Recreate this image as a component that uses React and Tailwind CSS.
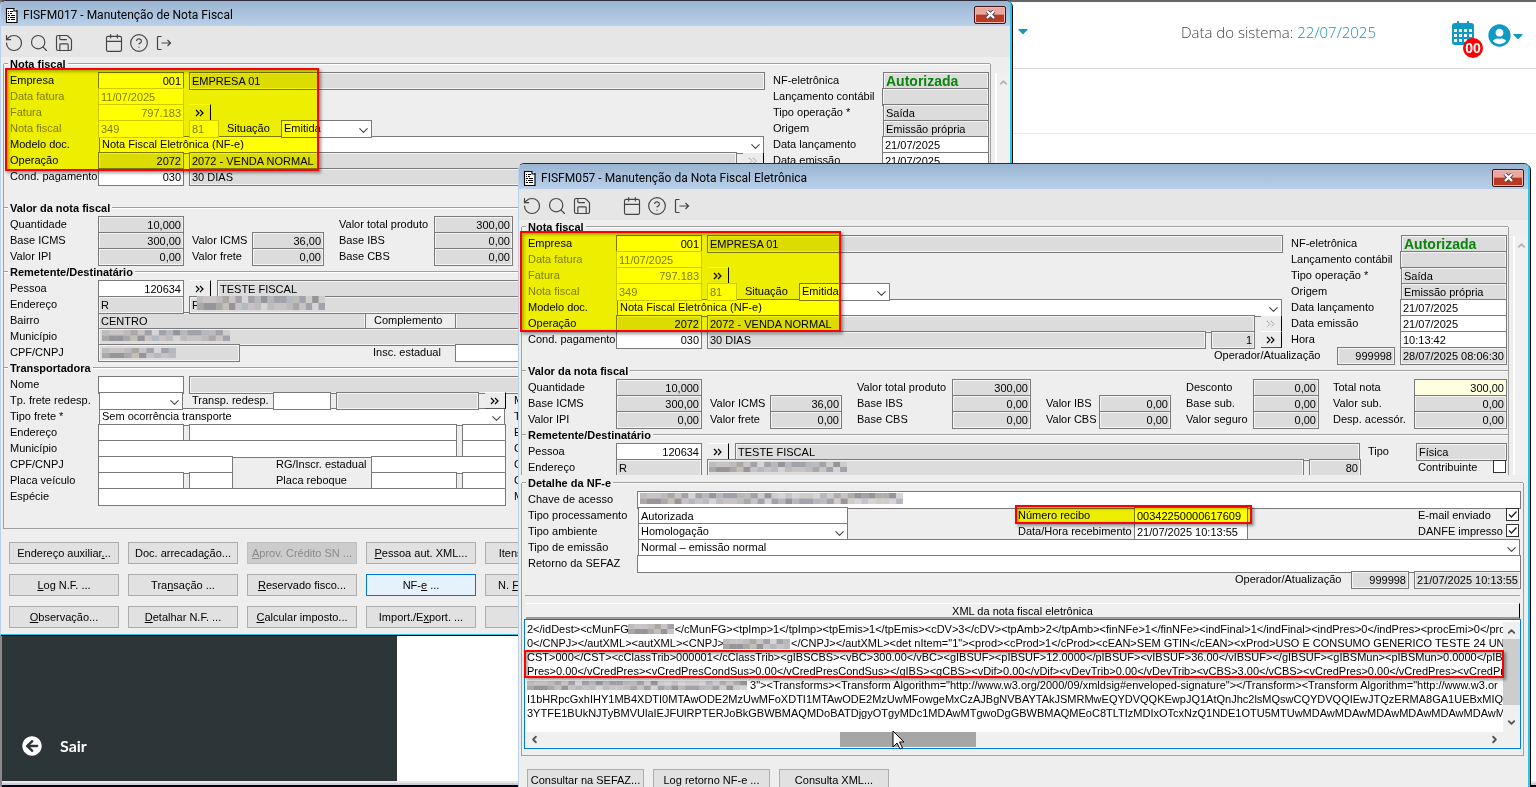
import React from 'react';
import { RotateCcw, Search, Save, Calendar, CircleHelp, ChevronUp, ChevronDown, ChevronLeft, ChevronRight } from 'lucide-react';
import { FaUserCircle, FaArrowCircleLeft, FaCaretDown } from 'react-icons/fa';

const XML_LINES = [
  '2</idDest><cMunFG               </cMunFG><tpImp>1</tpImp><tpEmis>1</tpEmis><cDV>3</cDV><tpAmb>2</tpAmb><finNFe>1</finNFe><indFinal>1</indFinal><indPres>0</indPres><procEmi>0</procEmi><v',
  '0</CNPJ></autXML><autXML><CNPJ>                      </CNPJ></autXML><det nItem="1"><prod><cProd>1</cProd><cEAN>SEM GTIN</cEAN><xProd>USO E CONSUMO GENERICO TESTE 24 UNICA</xProd>',
  'CST>000</CST><cClassTrib>000001</cClassTrib><gIBSCBS><vBC>300.00</vBC><gIBSUF><pIBSUF>12.0000</pIBSUF><vIBSUF>36.00</vIBSUF></gIBSUF><gIBSMun><pIBSMun>0.0000</pIBSMun><vIB',
  'Pres>0.00</vCredPres><vCredPresCondSus>0.00</vCredPresCondSus></gIBS><gCBS><vDif>0.00</vDif><vDevTrib>0.00</vDevTrib><vCBS>3.00</vCBS><vCredPres>0.00</vCredPres><vCredPresCond',
  '                                                                         3"><Transforms><Transform Algorithm="http://www.w3.org/2000/09/xmldsig#enveloped-signature"></Transform><Transform Algorithm="http://www.w3.or',
  'I1bHRpcGxhIHY1MB4XDTI0MTAwODE2MzUwMFoXDTI1MTAwODE2MzUwMFowgeMxCzAJBgNVBAYTAkJSMRMwEQYDVQQKEwpJQ1AtQnJhc2lsMQswCQYDVQQIEwJTQzERMA8GA1UEBxMIQmx1bW',
  '3YTFE1BUkNJTyBMVUlaIEJFUlRPTERJoBkGBWBMAQMDoBATDjgyOTgyMDc1MDAwMTgwoDgGBWBMAQMEoC8TLTIzMDIxOTcxNzQ1NDE1OTU5MTUwMDAwMDAwMDAwMDAwMDAwMDAwMDAwMDA',
];

const TONES = ['#bdbbbb', '#96959a', '#cfcdca', '#aaa8a6', '#d6d4d6', '#a1a2aa', '#c2bfb6', '#b4b8bf', '#c9c3c5', '#b0adab'];

/* ================= SMALL PIECES ================= */

// pixelated strip over private data
function Mosaic({ cols, rows = 2, className = '' }) {
  const cells = [];
  for (let y = 0; y < rows; y++) {
    for (let x = 0; x < cols; x++) {
      cells.push(<rect key={`${x}-${y}`} x={x} y={y} width="1.05" height="1.05" fill={TONES[(x * 7 + y * 3 + ((x * x) % 11)) % 10]} />);
    }
  }
  return (
    <svg aria-hidden="true" viewBox={`0 0 ${cols} ${rows}`} preserveAspectRatio="none"
         className={`absolute z-10 ${className}`}>
      {cells}
    </svg>
  );
}

// yellow marker with a red frame
function Marker({ className }) {
  return (
    <>
      <div className={`pointer-events-none absolute z-20 bg-[#ffff00] mix-blend-multiply ${className}`} />
      <div className={`pointer-events-none absolute z-20 border-2 border-[#ff0000] shadow-[2px_2px_3px_#00000066,inset_2px_2px_3px_#00000044] ${className}`} />
    </>
  );
}

function Lbl({ htmlFor, w = '', dim, children }) {
  return (
    <label htmlFor={htmlFor} className={`shrink-0 whitespace-nowrap leading-4 ${w} ${dim ? 'text-[#7d7d7d]' : 'text-black'}`}>
      {children}
    </label>
  );
}

const KINDS = {
  edit: 'bg-white border-[#7a7a7a] text-black',
  read: 'bg-[#dcdcdc] border-[#7a7a7a] text-black shadow-[inset_0_0_0_1px_#f4f4f4]',
  dim: 'bg-white border-[#cccccc] text-[#7d7d7d]',
  total: 'bg-[#ffffe1] border-[#7a7a7a] text-black',
  ok: 'bg-[#dcdcdc] border-[#7a7a7a] text-[#0a840a] font-bold text-sm shadow-[inset_0_0_0_1px_#f4f4f4]',
};

function Box({ id, name, value = '', w = '', kind = 'edit', right }) {
  return (
    <input
      id={id}
      aria-label={name}
      readOnly
      value={value}
      className={`h-[18px] min-w-0 border px-[2px] outline-none ${w} ${KINDS[kind]} ${right ? 'text-right' : ''}`}
    />
  );
}

function Pick({ id, name, value = '', w = '' }) {
  return (
    <div className={`relative h-[18px] min-w-0 ${w}`}>
      <select id={id} aria-label={name} defaultValue={value}
              className="block h-[18px] w-full appearance-none border border-[#7a7a7a] bg-white px-[2px] pb-[2px] leading-[14px] text-black outline-none">
        <option>{value}</option>
      </select>
      <ChevronDown className="pointer-events-none absolute right-px top-[3px] h-[15px] w-[15px] text-[#444]" strokeWidth={1.7} />
    </div>
  );
}

function More({ name, disabled }) {
  return (
    <button aria-label={name} disabled={disabled}
            className="flex h-[17px] w-[21px] shrink-0 items-center justify-center border-b border-r border-t border-b-[#555] border-r-black border-t-white bg-[#ececec]">
      <svg width="10" height="8" viewBox="0 0 10 8" fill="none"
           className={disabled ? 'stroke-[#a0a0a0]' : 'stroke-black'} strokeWidth="1.2">
        <path d="M1 1l3 3-3 3M5 1l3 3-3 3" strokeDasharray={disabled ? '1 1' : undefined} />
      </svg>
    </button>
  );
}

function Row({ children, className = '' }) {
  return <div className={`flex h-4 items-start ${className}`}>{children}</div>;
}

function Legend({ children, className = '' }) {
  return (
    <div className={`flex h-4 items-center ${className}`}>
      <span className="w-1 border-b border-t border-b-white border-t-[#a0a0a0]" />
      <b className="whitespace-nowrap px-[2px] leading-4">{children}</b>
      <span className="flex-1 border-b border-t border-b-white border-t-[#a0a0a0]" />
    </div>
  );
}

// letter after "&" is the shortcut key
function Act({ text = '', w = 'w-[110px]', disabled, active }) {
  const [before, rest = ''] = text.split('&');
  return (
    <button disabled={disabled}
            className={`h-[22px] shrink-0 whitespace-nowrap border ${w}
              ${disabled ? 'border-[#bfbfbf] bg-[#cccccc] text-[#8a8a8a]' : ''}
              ${active ? 'border-[#0078d7] bg-[#e5f1fb]' : ''}
              ${!disabled && !active ? 'border-[#adadad] bg-[#e1e1e1]' : ''}`}>
      {before}<span className="underline">{rest.slice(0, 1)}</span>{rest.slice(1)}
    </button>
  );
}

function ExitIcon() {
  return (
    <svg width="16" height="16" viewBox="0 0 16 16" fill="none" stroke="#444" strokeWidth="1.2">
      <path d="M5.500 1.500h-3a1 1 0 0 0-1 1v11a1 1 0 0 0 1 1h3M5.500 8h9M11.500 5l3 3-3 3" />
    </svg>
  );
}

/* ================= WINDOW ================= */

function Win({ title, className, children }) {
  const ico = 'h-5 w-5 text-[#444]';
  return (
    <section className={`absolute flex flex-col overflow-hidden rounded-t-md border-l border-r-2 border-t border-l-[#b9d1ea] border-r-[#29c4e8] border-t-[#2b2b3a] bg-[#eeeeee] shadow-[1px_1px_0_#000] ${className}`}>
      <header className="flex h-[25px] shrink-0 items-center bg-linear-to-b from-[#9ab4d1] to-[#b9d1ea] pl-1 pr-1 pt-[2px]">
        <svg width="13" height="16" viewBox="0 0 13 16" aria-hidden="true">
          <path d="M1 1h8l3 3v11H1z" fill="#fff" />
          <path d="M1.500 15V1.500H9M12 3v12.500H1M9 1v3h3" fill="none" stroke="#000" strokeWidth="1.200" />
          <path d="M3 4.500h1M5 4.500h3M3 6.500h1M5 6.500h2M3 8.500h2M6 8.500h4M3 10.500h1M5 10.500h5M3 12.500h2M6 12.500h4" stroke="#000" />
        </svg>
        <h1 className="flex-1 pl-[5px] font-['Roboto'] text-xs text-black">{title}</h1>
        <button aria-label="Fechar"
                className="flex h-[18px] w-8 items-center justify-center rounded-xs border border-[#42141c] bg-linear-to-b from-[#e9a79d] from-45% to-[#b93a22] to-50% shadow-[inset_0_0_0_1px_#f0b8ae]">
          <svg width="11" height="9" viewBox="0 0 11 9">
            <path d="M2 1l7 7M9 1L2 8" stroke="#4a4a5c" strokeWidth="4" />
            <path d="M2 1l7 7M9 1L2 8" stroke="#fff" strokeWidth="2.200" />
          </svg>
        </button>
      </header>

      <nav className="flex h-[31px] shrink-0 items-center gap-[5px] bg-[#e6e6e6] pb-px pl-[3px] pt-[3px]">
        <button aria-label="Desfazer"><RotateCcw className={ico} strokeWidth={1.4} /></button>
        <button aria-label="Pesquisar"><Search className={ico} strokeWidth={1.4} /></button>
        <button aria-label="Salvar"><Save className={ico} strokeWidth={1.4} /></button>
        <button aria-label="Calendário" className="ml-[25px]"><Calendar className={ico} strokeWidth={1.4} /></button>
        <button aria-label="Ajuda"><CircleHelp className={ico} strokeWidth={1.4} /></button>
        <button aria-label="Sair da tela" className="pl-[2px]"><ExitIcon /></button>
      </nav>
      {children}
    </section>
  );
}

/* ================= INVOICE FORM ================= */

function NotaFiscal({ p }) {
  return (
    <>
      <Legend className="-mt-2">Nota fiscal</Legend>
      <div className="flex pl-[6px] pr-px">
        <div className="min-w-0 flex-1">
          <Row>
            <Lbl htmlFor={`${p}emp`} w="w-[88px]">Empresa</Lbl>
            <Box id={`${p}emp`} value="001" w="w-[86px]" right />
            <Box name="Nome da empresa" value="EMPRESA 01" kind="read" w="ml-[5px] flex-1" />
          </Row>
          <Row>
            <Lbl htmlFor={`${p}dtf`} w="w-[88px]" dim>Data fatura</Lbl>
            <Box id={`${p}dtf`} value="11/07/2025" kind="dim" w="w-[86px]" />
          </Row>
          <Row>
            <Lbl htmlFor={`${p}fat`} w="w-[88px]" dim>Fatura</Lbl>
            <Box id={`${p}fat`} value="797.183" kind="dim" w="w-[86px]" right />
            <span className="w-[6px]" />
            <More name="Abrir fatura" />
          </Row>
          <Row className="relative z-10">
            <Lbl htmlFor={`${p}nf`} w="w-[88px]" dim>Nota fiscal</Lbl>
            <Box id={`${p}nf`} value="349" kind="dim" w="w-[86px]" />
            <Box name="Série" value="81" kind="dim" w="ml-[5px] w-[30px]" />
            <span className="w-2" />
            <Lbl htmlFor={`${p}sit`} w="w-[54px]">Situação</Lbl>
            <Pick id={`${p}sit`} value="Emitida" w="w-[91px]" />
          </Row>
          <Row>
            <Lbl htmlFor={`${p}mod`} w="w-[89px]">Modelo doc.</Lbl>
            <Pick id={`${p}mod`} value="Nota Fiscal Eletrônica (NF-e)" w="mr-px flex-1" />
          </Row>
          <Row className="relative">
            <Lbl htmlFor={`${p}op`} w="w-[88px]">Operação</Lbl>
            <Box id={`${p}op`} value="2072" kind="read" w="w-[86px]" right />
            <Box name="Descrição da operação" value="2072 - VENDA NORMAL" kind="read" w="ml-[5px] mr-[6px] flex-1" />
            <More name="Abrir operação" disabled />
            <span className="w-px" />
          </Row>
          <Row className="relative">
            <Lbl htmlFor={`${p}cp`} w="w-[88px]">Cond. pagamento</Lbl>
            <Box id={`${p}cp`} value="030" w="w-[86px]" right />
            <Box name="Descrição do pagamento" value="30 DIAS" kind="read" w="ml-[5px] mr-[5px] flex-1" />
            <Box name="Parcelas" value="1" kind="read" w="mr-[6px] w-[44px]" right />
            <More name="Abrir parcelas" />
            <span className="w-px" />
          </Row>
        </div>

        <div className="ml-2 w-[216px] shrink-0">
          <Row>
            <Lbl htmlFor={`${p}nfe`} w="w-[110px]">NF-eletrônica</Lbl>
            <Box id={`${p}nfe`} value="Autorizada" kind="ok" w="flex-1" />
          </Row>
          <Row>
            <Lbl htmlFor={`${p}lc`} w="w-[109px]">Lançamento contábil</Lbl>
            <Box id={`${p}lc`} kind="read" w="flex-1" />
          </Row>
          <Row>
            <Lbl htmlFor={`${p}to`} w="w-[110px]">Tipo operação *</Lbl>
            <Box id={`${p}to`} value="Saída" kind="read" w="flex-1" />
          </Row>
          <Row>
            <Lbl htmlFor={`${p}or`} w="w-[110px]">Origem</Lbl>
            <Box id={`${p}or`} value="Emissão própria" kind="read" w="flex-1" />
          </Row>
          <Row>
            <Lbl htmlFor={`${p}dl`} w="w-[109px]">Data lançamento</Lbl>
            <Box id={`${p}dl`} value="21/07/2025" w="flex-1" />
          </Row>
          <Row>
            <Lbl htmlFor={`${p}de`} w="w-[109px]">Data emissão</Lbl>
            <Box id={`${p}de`} value="21/07/2025" w="flex-1" />
          </Row>
          <Row>
            <Lbl htmlFor={`${p}hr`} w="w-[109px]">Hora</Lbl>
            <Box id={`${p}hr`} value="10:13:42" w="flex-1" />
          </Row>
        </div>
      </div>
      <Row className="justify-end pr-px">
        <Lbl htmlFor={`${p}oa`} w="w-[123px]">Operador/Atualização</Lbl>
        <Box id={`${p}oa`} value="999998" kind="read" w="mr-[5px] w-[58px]" right />
        <Box name="Data da atualização" value="28/07/2025 08:06:30" kind="read" w="w-[107px]" />
      </Row>
    </>
  );
}

function Valores({ p }) {
  const rows = [
    ['Quantidade', '10,000', '', '', 'Valor total produto', '300,00', '', '', 'Desconto', '0,00', 'Total nota', '300,00'],
    ['Base ICMS', '300,00', 'Valor ICMS', '36,00', 'Base IBS', '0,00', 'Valor IBS', '0,00', 'Base sub.', '0,00', 'Valor sub.', '0,00'],
    ['Valor IPI', '0,00', 'Valor frete', '0,00', 'Base CBS', '0,00', 'Valor CBS', '0,00', 'Valor seguro', '0,00', 'Desp. acessór.', '0,00'],
  ];
  const lw = ['w-[88px]', 'w-[60px]', 'w-[95px]', 'w-[53px]', 'w-[67px]', 'w-[81px]'];
  const bw = ['w-[86px]', 'w-[72px]', 'w-[79px]', 'w-[72px]', 'w-[66px]', 'w-[93px]'];
  const gap = ['', 'ml-2', 'ml-[15px]', 'ml-[15px]', 'ml-[15px]', 'ml-[14px]'];
  return (
    <>
      <Legend>Valor da nota fiscal</Legend>
      {rows.map((r, i) => (
        <Row key={i} className="pl-[6px]">
          {lw.map((w, k) => {
            const label = r[k * 2];
            return (
              <React.Fragment key={k}>
                <span className={gap[k]} />
                <Lbl htmlFor={label ? `${p}v${i}${k}` : undefined} w={w}>{label}</Lbl>
                {label
                  ? <Box id={`${p}v${i}${k}`} value={r[k * 2 + 1]} kind={label === 'Total nota' ? 'total' : 'read'} w={bw[k]} right />
                  : <span className={bw[k]} />}
              </React.Fragment>
            );
          })}
        </Row>
      ))}
    </>
  );
}

function Remetente({ p, short }) {
  return (
    <>
      <Legend>Remetente/Destinatário</Legend>
      <Row className="pl-[6px] pr-px">
        <Lbl htmlFor={`${p}pes`} w="w-[88px]">Pessoa</Lbl>
        <Box id={`${p}pes`} value="120634" w="w-[86px]" right />
        <span className="w-[6px]" />
        <More name="Abrir pessoa" />
        <Box name="Nome da pessoa" value="TESTE FISCAL" kind="read" w="ml-[6px] flex-1" />
        <Lbl htmlFor={`${p}tp`} w="ml-2 w-[48px]">Tipo</Lbl>
        <Box id={`${p}tp`} value="Física" kind="read" w="w-[91px]" />
      </Row>
      <Row className="relative pl-[6px] pr-[2px]">
        <Lbl htmlFor={`${p}end`} w="w-[88px]">Endereço</Lbl>
        <Box id={`${p}end`} value="R" kind="read" w="w-[86px]" />
        <Box name="Logradouro" value={short ? '' : 'F'} kind="read" w="ml-[5px] mr-[5px] flex-1" />
        <Box name="Número" value="80" kind="read" w="mr-[57px] w-[52px]" right />
        <Lbl htmlFor={`${p}ct`} w="w-[75px]">Contribuinte</Lbl>
        <input id={`${p}ct`} type="checkbox" readOnly checked={false} className="mt-px h-[13px] w-[13px] appearance-none border border-[#333] bg-white" />
        <Mosaic cols={20} rows={2} className={short ? 'left-[187px] top-[3px] h-[10px] w-[138px]' : 'left-[193px] top-0 h-[14px] w-[128px]'} />
      </Row>
      {!short && (
        <>
          <Row className="pl-[6px] pr-px">
            <Lbl htmlFor={`${p}bai`} w="w-[88px]">Bairro</Lbl>
            <Box id={`${p}bai`} value="CENTRO" kind="read" w="w-[268px]" />
            <span className="w-2" />
            <Lbl htmlFor={`${p}com`} w="w-[81px]">Complemento</Lbl>
            <Box id={`${p}com`} kind="read" w="flex-1" />
          </Row>
          <Row className="relative pl-[6px] pr-px">
            <Lbl htmlFor={`${p}mun`} w="w-[88px]">Município</Lbl>
            <Box id={`${p}mun`} kind="read" w="flex-1" />
            <Mosaic cols={18} className="left-[98px] top-[2px] h-[11px] w-[128px]" />
          </Row>
          <Row className="relative pl-[6px] pr-px">
            <Lbl htmlFor={`${p}cpf`} w="w-[88px]">CPF/CNPJ</Lbl>
            <Box id={`${p}cpf`} kind="read" w="w-[142px]" />
            <span className="w-[133px]" />
            <Lbl htmlFor={`${p}ie`} w="w-[82px]">Insc. estadual</Lbl>
            <Box id={`${p}ie`} w="flex-1" />
            <Mosaic cols={10} className="left-[98px] top-1 h-[10px] w-[74px]" />
          </Row>
        </>
      )}
    </>
  );
}

function Transportadora({ p }) {
  return (
    <>
      <Legend>Transportadora</Legend>
      <Row className="pl-[6px] pr-px">
        <Lbl htmlFor={`${p}tn`} w="w-[88px]">Nome</Lbl>
        <Box id={`${p}tn`} w="w-[86px]" />
        <Box name="Nome da transportadora" kind="read" w="ml-[5px] flex-1" />
      </Row>
      <div className="flex pl-[6px]">
        <div className="w-[496px]">
          <Row className="relative z-10">
            <Lbl htmlFor={`${p}tf`} w="w-[89px]">Tp. frete redesp.</Lbl>
            <Pick id={`${p}tf`} w="w-[84px]" />
            <span className="w-[9px]" />
            <Lbl htmlFor={`${p}tr`} w="w-[81px]">Transp. redesp.</Lbl>
            <Box id={`${p}tr`} w="w-[58px]" />
            <Box name="Transportadora redespacho" kind="read" w="ml-[5px] mr-[6px] flex-1" />
            <More name="Abrir redespacho" />
          </Row>
          <Row>
            <Lbl htmlFor={`${p}tpf`} w="w-[89px]">Tipo frete *</Lbl>
            <Pick id={`${p}tpf`} value="Sem ocorrência transporte" w="mr-px flex-1" />
          </Row>
          <Row className="relative">
            <Lbl htmlFor={`${p}te`} w="w-[88px]">Endereço</Lbl>
            <Box id={`${p}te`} w="w-[86px]" />
            <Box name="Rua" w="ml-[5px] mr-[5px] flex-1" />
            <Box name="Número do endereço" w="w-[44px]" />
          </Row>
          <Row className="relative">
            <Lbl htmlFor={`${p}tm`} w="w-[88px]">Município</Lbl>
            <Box id={`${p}tm`} w="mr-[5px] flex-1" />
            <Box name="UF" w="w-[44px]" />
          </Row>
          <Row className="relative">
            <Lbl htmlFor={`${p}tc`} w="w-[88px]">CPF/CNPJ</Lbl>
            <Box id={`${p}tc`} w="w-[135px]" />
            <span className="w-[43px]" />
            <Lbl htmlFor={`${p}rg`} w="w-[95px]">RG/Inscr. estadual</Lbl>
            <Box id={`${p}rg`} w="flex-1" />
          </Row>
          <Row className="relative">
            <Lbl htmlFor={`${p}pv`} w="w-[88px]">Placa veículo</Lbl>
            <Box id={`${p}pv`} w="w-[86px]" />
            <Box name="UF do veículo" w="ml-[5px] w-[44px]" />
            <span className="w-[43px]" />
            <Lbl htmlFor={`${p}pr`} w="w-[95px]">Placa reboque</Lbl>
            <Box id={`${p}pr`} w="mr-[5px] flex-1" />
            <Box name="UF do reboque" w="w-[44px]" />
          </Row>
          <Row className="relative">
            <Lbl htmlFor={`${p}es`} w="w-[88px]">Espécie</Lbl>
            <Box id={`${p}es`} w="flex-1" />
          </Row>
        </div>
        <div className="pl-2 leading-4">
          {['M', 'T', 'E', 'C', 'C', 'C', 'M'].map((t, i) => <div key={i}>{t}</div>)}
        </div>
      </div>
    </>
  );
}

function FormFrame({ children, className = '' }) {
  return (
    <div className={`flex pl-[2px] pt-[7px] ${className}`}>
      <div className="min-w-0 flex-1 border-l border-r border-[#a0a0a0]">{children}</div>
      <div className="ml-1 mt-[9px] flex w-[15px] shrink-0 justify-center border-l-2 border-white bg-[#f0f0f0]">
        <ChevronUp className="mt-1 h-[11px] w-[11px] text-[#b5b5b5]" strokeWidth={4} />
      </div>
    </div>
  );
}

/* ================= ELECTRONIC INVOICE DETAIL ================= */

function Tick({ id, label }) {
  return (
    <>
      <Lbl htmlFor={id} w="ml-auto w-[88px]">{label}</Lbl>
      <span className="relative mr-[2px] mt-px h-[13px] w-[13px]">
        <input id={id} type="checkbox" checked readOnly className="block h-[13px] w-[13px] appearance-none border border-[#333] bg-white" />
        <svg viewBox="0 0 13 13" className="pointer-events-none absolute inset-0" fill="none" stroke="#222" strokeWidth="1.300">
          <path d="M3 6.500l2.500 2.500 5-5.500" />
        </svg>
      </span>
    </>
  );
}

function DetalheNFe() {
  return (
    <div className="ml-[2px] mr-1 mt-2 border-b border-l border-r border-[#a0a0a0] pb-[6px]">
      <Legend className="-mt-2">Detalhe da NF-e</Legend>
      <Row className="relative pl-[6px] pr-[2px]">
        <Lbl htmlFor="chave" w="w-[109px]">Chave de acesso</Lbl>
        <Box id="chave" w="flex-1" />
        <Mosaic cols={38} className="left-[118px] top-[2px] h-[11px] w-[263px]" />
      </Row>
      <Row className="relative pl-[6px] pr-[2px]">
        <Lbl htmlFor="proc" w="w-[110px]">Tipo processamento</Lbl>
        <Box id="proc" value="Autorizada" w="w-[210px]" />
        <span className="w-[170px]" />
        <div className="relative flex">
          <Lbl htmlFor="recibo" w="w-[116px]">Número recibo</Lbl>
          <Box id="recibo" value="00342250000617609" w="w-[114px]" />
          <Marker className="-left-[3px] -right-1 -top-[2px] h-[19px]" />
        </div>
        <Tick id="mail" label="E-mail enviado" />
      </Row>
      <Row className="relative pl-[6px] pr-[2px]">
        <Lbl htmlFor="amb" w="w-[110px]">Tipo ambiente</Lbl>
        <Pick id="amb" value="Homologação" w="w-[210px]" />
        <span className="w-[170px]" />
        <Lbl htmlFor="receb" w="w-[116px]">Data/Hora recebimento</Lbl>
        <Box id="receb" value="21/07/2025 10:13:55" w="w-[114px]" />
        <Tick id="danfe" label="DANFE impresso" />
      </Row>
      <Row className="pl-[6px] pr-[2px]">
        <Lbl htmlFor="emis" w="w-[110px]">Tipo de emissão</Lbl>
        <Pick id="emis" value="Normal – emissão normal" w="mr-px flex-1" />
      </Row>
      <Row className="relative pl-[6px] pr-[2px]">
        <Lbl htmlFor="sefaz" w="w-[109px]">Retorno da SEFAZ</Lbl>
        <Box id="sefaz" w="flex-1" />
      </Row>
      <Row className="relative justify-end pr-[2px]">
        <Lbl htmlFor="oper" w="w-[116px]">Operador/Atualização</Lbl>
        <Box id="oper" value="999998" kind="read" w="mr-[5px] w-[58px]" right />
        <Box name="Data da atualização" value="21/07/2025 10:13:55" kind="read" w="w-[107px]" />
      </Row>

      <div className="mx-[3px] mt-2 border-t border-[#a0a0a0]" />
      <button className="ml-1 mt-[7px] block h-4 w-[calc(100%-7px)] border-b-2 border-r border-t border-b-[#9a9a9a] border-r-black border-t-white bg-[#efefef] leading-[14px]">
        XML da nota fiscal eletrônica
      </button>
      <XmlBox />
    </div>
  );
}

function XmlBox() {
  return (
    <div className="relative ml-[2px] mr-[2px] flex h-[130px] flex-col border border-[#0078d7] bg-white">
      <div className="flex h-[112px] pt-[2px]">
        <textarea readOnly aria-label="XML da nota fiscal eletrônica" value={XML_LINES.join('\n')}
                  className="block min-w-0 flex-1 resize-none overflow-hidden whitespace-pre pl-[2px] leading-[14px] outline-none" />
        <div className="flex w-[17px] flex-col items-center bg-[#f0f0f0] pb-1 pt-1">
          <ChevronUp className="h-[11px] w-[11px] shrink-0 text-[#555]" strokeWidth={4} />
          <div className="mt-[2px] h-[66px] w-full bg-[#cdcdcd]" />
          <span className="flex-1" />
          <ChevronDown className="h-[11px] w-[11px] shrink-0 text-[#555]" strokeWidth={4} />
        </div>
      </div>
      <div className="flex h-[15px] items-center bg-[#f0f0f0] pl-1 pr-5">
        <ChevronLeft className="h-[11px] w-[11px] text-[#555]" strokeWidth={4} />
        <div className="ml-[300px] h-[15px] w-[136px] bg-[#a6a6a6]" />
        <ChevronRight className="ml-auto h-[11px] w-[11px] text-[#555]" strokeWidth={4} />
      </div>

      <Mosaic cols={7} className="left-[103px] top-1 h-[10px] w-[46px]" />
      <Mosaic cols={10} className="left-[198px] top-[19px] h-[10px] w-[67px]" />
      <Mosaic cols={32} className="left-[2px] top-[61px] h-[9px] w-[220px]" />
      <div className="pointer-events-none absolute -left-px right-4 top-[30px] z-20 h-[28px] border-2 border-[#ff0000] shadow-[2px_2px_3px_#00000066,inset_2px_2px_3px_#00000055]" />
      <svg className="absolute left-[367px] top-[110px] z-20" width="13" height="20" viewBox="0 0 13 20">
        <path d="M1 1v16l4-4 3 6 2.500-1.200-3-5.800H12z" fill="#fff" stroke="#000" />
      </svg>
    </div>
  );
}

/* ================= WEB PAGE BEHIND ================= */

function WebPage() {
  return (
    <div className="flex h-full flex-col border-l-2 border-t-2 border-l-[#8a8a8a] border-t-[#666] bg-white">
      <header className="flex h-[67px] shrink-0 items-start justify-end border-b border-[#dcdcdc] pr-[13px] text-base text-[#444]">
        <FaCaretDown className="mr-[153px] mt-[21px] h-4 w-[10px] text-[#0e9ac3]" />
        <p className="mt-[18px] font-['Open_Sans'] text-[15px] font-light leading-6">
          Data do sistema: <a href="#data" className="text-[#1a8fbd]">22/07/2025</a>
        </p>
        <button aria-label="Agenda" className="relative ml-[76px] mt-[18px]">
          <svg width="22" height="26" viewBox="0 0 22 26">
            <path d="M6 1v5M16 1v5" stroke="#0e9ac3" strokeWidth="2" />
            <rect y="3" width="22" height="22" rx="3" fill="#0e9ac3" />
            <path fill="#fff" d="M2 9h3v3H2zM7 9h3v3H7zM12 9h3v3h-3zM17 9h3v3h-3zM2 14h3v3H2zM7 14h3v3H7zM12 14h3v3h-3zM17 14h3v3h-3zM2 19h3v3H2zM7 19h3v3H7zM12 19h3v3h-3zM17 19h3v3h-3z" />
          </svg>
          <span className="absolute -right-[9px] top-[18px] flex h-5 w-5 items-center justify-center rounded-full bg-[#ff0000] text-sm font-bold text-white">00</span>
        </button>
        <button aria-label="Usuário" className="ml-[14px] mt-[22px] flex items-center gap-[2px] text-[#0e9ac3]">
          <FaUserCircle className="h-[23px] w-[23px]" />
          <FaCaretDown className="h-4 w-[10px]" />
        </button>
      </header>
      <div className="h-[65px] shrink-0 border-b border-[#e8e8e8]" />
      <aside className="flex w-[395px] flex-1 items-end bg-[#2c3638] pb-[23px] pl-5">
        <a href="#sair" className="flex items-center gap-[18px] font-['Lato'] text-base font-bold text-white">
          <FaArrowCircleLeft className="h-5 w-5" />
          Sair
        </a>
      </aside>
      <footer className="h-[6px] shrink-0 border-b-2 border-t-2 border-b-black border-t-[#e8e8e8] bg-[#c4d0e4]" />
    </div>
  );
}

/* ================= APP ================= */

export default function App() {
  return (
    <main className="relative h-screen overflow-hidden bg-[#b9c6dc] font-['Liberation_Sans',sans-serif] text-[11px] text-black">
      <WebPage />

      <Win title="FISFM017 - Manutenção de Nota Fiscal" className="left-0 top-0 w-[1012px] border-b border-b-[#29c4e8]">
        <FormFrame>
          <NotaFiscal p="a" />
          <Valores p="a" />
          <Remetente p="a" />
          <Transportadora p="a" />
          <div className="h-[25px] border-b border-[#a0a0a0]" />
        </FormFrame>
        <div className="flex flex-col gap-[10px] pb-[6px] pl-2 pt-[13px]">
          <div className="flex gap-[9px]">
            <Act text="Endereço auxiliar&..." />
            <Act text="Doc. arrecada&ção..." />
            <Act text="&Aprov. Crédito SN ..." disabled />
            <Act text="&Pessoa aut. XML..." />
            <Act text="Itens agrupado..." />
          </div>
          <div className="flex gap-[9px]">
            <Act text="&Log N.F. ..." />
            <Act text="Tra&nsação ..." />
            <Act text="&Reservado fisco..." />
            <Act text="NF-&e ..." active />
            <Act text="N. &F. referencia..." />
          </div>
          <div className="flex gap-[9px]">
            <Act text="&Observação..." />
            <Act text="&Detalhar N.F. ..." />
            <Act text="&Calcular imposto..." />
            <Act text="Import./E&xport. ..." />
            <Act />
          </div>
        </div>
        <Marker className="left-1 top-[67px] h-[103px] w-[314px]" />
      </Win>

      <Win title="FISFM057 - Manutenção da Nota Fiscal Eletrônica" className="bottom-0 left-[518px] right-[6px] top-[163px]">
        <FormFrame className="h-[255px] shrink-0 overflow-hidden">
          <NotaFiscal p="b" />
          <Valores p="b" />
          <Remetente p="b" short />
        </FormFrame>
        <DetalheNFe />
        <div className="flex gap-[9px] pl-2 pt-[13px]">
          <Act text="Consultar na SEFAZ..." w="w-[117px]" />
          <Act text="Log retorno NF-e ..." w="w-[117px]" />
          <Act text="Consulta XML..." />
        </div>
        <Marker className="left-px top-[67px] h-[101px] w-[321px]" />
      </Win>
    </main>
  );
}
